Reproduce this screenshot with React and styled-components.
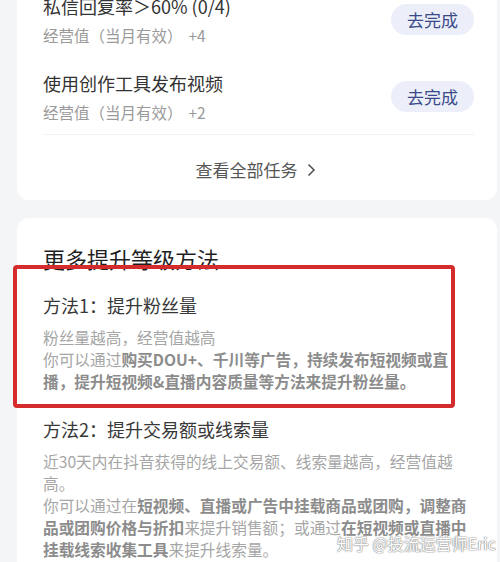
import React from 'react'
import styled, { createGlobalStyle } from 'styled-components'

const GlobalStyle = createGlobalStyle`
  html, body {
    margin: 0;
    padding: 0;
    background: #f4f5f7;
    overflow: hidden;
  }
  body {
    font-family: 'Noto Sans CJK SC', 'Noto Sans', sans-serif;
  }
`

const tasks = [
  { title: '私信回复率＞60% (0/4)', points: '+4' },
  { title: '使用创作工具发布视频', points: '+2' },
]

export default function App() {
  return (
    <>
      <GlobalStyle />
      <Page>
        <Card>
          {tasks.map((t) => (
            <TaskRow key={t.title}>
              <TaskText>
                <TaskTitle>{t.title}</TaskTitle>
                <TaskSub>
                  经营值（当月有效）<Points>{t.points}</Points>
                </TaskSub>
              </TaskText>
              <GoButton>去完成</GoButton>
            </TaskRow>
          ))}
          <Divider />
          <AllTasks>
            查看全部任务
            <svg width="10" height="14" viewBox="0 0 10 14">
              <path d="M2.5 1.5 L8 7 L2.5 12.5" fill="none" stroke="#555" strokeWidth="1.6" />
            </svg>
          </AllTasks>
        </Card>

        <Card $spaced>
          <Heading>更多提升等级方法</Heading>
          <MethodTitle>方法1：提升粉丝量</MethodTitle>
          <Desc>
            粉丝量越高，经营值越高
            <br />
            你可以通过<b>购买DOU+、千川等广告，持续发布短视频或直</b>
            <br />
            <b>播，提升短视频&amp;直播内容质量等方法来提升粉丝量。</b>
          </Desc>
          <MethodTitle $gap>方法2：提升交易额或线索量</MethodTitle>
          <Desc>
            近30天内在抖音获得的线上交易额、线索量越高，经营值越
            <br />
            高。
            <br />
            你可以通过在<b>短视频、直播或广告中挂载商品或团购，调整商</b>
            <br />
            <b>品或团购价格与折扣</b>来提升销售额；或通过<b>在短视频或直播中</b>
            <br />
            <b>挂载线索收集工具</b>来提升线索量。
          </Desc>
          <Highlight />
          <Watermark>知乎 @投流运营师Eric</Watermark>
        </Card>
      </Page>
    </>
  )
}

const Page = styled.div`
  margin-top: -30px;
  padding: 0 3px 0 17px;
`

const Card = styled.div`
  position: relative;
  background: #fff;
  border-radius: 12px;
  padding: ${(p) => (p.$spaced ? '25px 23px 40px 26px' : '23px 23px 0 26px')};
  margin-top: ${(p) => (p.$spaced ? '18px' : '0')};
`

const TaskRow = styled.div`
  display: flex;
  align-items: center;
  justify-content: space-between;
  & + & {
    margin-top: 24px;
  }
`

const TaskText = styled.div`
  display: flex;
  flex-direction: column;
`

const TaskTitle = styled.div`
  font-size: 18px;
  line-height: 26px;
  color: #333;
`

const TaskSub = styled.div`
  margin-top: 5px;
  font-size: 15.5px;
  line-height: 22px;
  color: #9a9a9a;
`

const Points = styled.span`
  margin-left: 6px;
`

const GoButton = styled.div`
  width: 83px;
  height: 31px;
  border-radius: 16px;
  background: #eceffa;
  color: #3a4a88;
  font-size: 17px;
  display: flex;
  align-items: center;
  justify-content: center;
`

const Divider = styled.div`
  margin-top: 11px;
  height: 1px;
  background: #f1f1f1;
`

const AllTasks = styled.div`
  display: flex;
  align-items: center;
  justify-content: center;
  gap: 8px;
  padding: 23px 6px 18px 0;
  font-size: 17px;
  line-height: 24px;
  color: #555;
`

const Heading = styled.div`
  font-size: 22px;
  line-height: 30px;
  color: #1f1f1f;
`

const MethodTitle = styled.div`
  margin-top: ${(p) => (p.$gap ? '23px' : '19px')};
  font-size: 18px;
  line-height: 26px;
  color: #383838;
`

const Desc = styled.div`
  margin-top: 9px;
  font-size: 15.7px;
  line-height: 22px;
  color: #a6a6a6;
  white-space: nowrap;
  b {
    color: #8c8c8c;
    font-weight: 700;
  }
`

const Highlight = styled.div`
  position: absolute;
  left: -4px;
  top: 47px;
  width: 442px;
  height: 143px;
  box-sizing: border-box;
  border: 4px solid #d42c2c;
  border-radius: 4px;
  pointer-events: none;
`

const Watermark = styled.div`
  position: absolute;
  left: 320px;
  top: 314px;
  font-size: 16px;
  line-height: 22px;
  color: #fff;
  text-shadow: 0 0 1px #888, 0 0 1px #888, 0 0 2px #aaa;
  white-space: nowrap;
`
